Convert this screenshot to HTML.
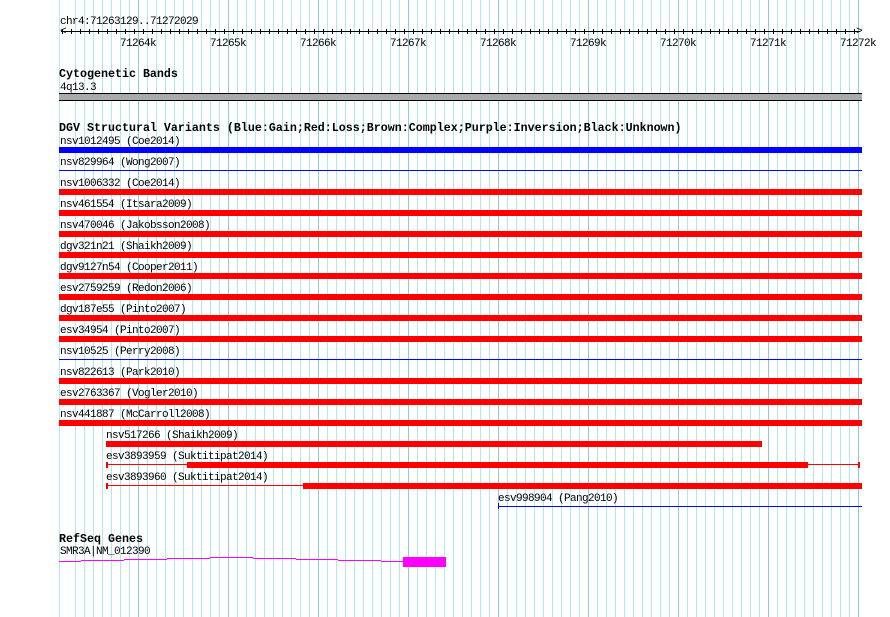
<!DOCTYPE html>
<html><head><style>
body{margin:0;width:890px;height:617px;background:#fff;position:relative;overflow:hidden;font-family:"Liberation Mono",monospace;}
.l{position:absolute;top:0;height:617px;width:1px;background:#aee9ef;}
.M{background:#8ccbe8;}
.t{position:absolute;font-size:11px;letter-spacing:-0.6px;line-height:12px;color:#000;white-space:pre;margin-top:2px;}
.h{position:absolute;font-size:11.67px;line-height:13px;font-weight:bold;color:#000;white-space:pre;margin-top:1px;}
.b{position:absolute;}
.k{margin-top:4px;}
</style></head><body>
<div id="g"></div>
<script>
var g=document.getElementById('g'),s='';
s+='<div class="l" style="left:59px"></div>';
for(var x=75;x<=858;x+=9){s+='<div class="l'+(((x-138)%90==0)?' M':'')+'" style="left:'+x+'px"></div>';}
for(var x=62;x<=858;x+=9){s+='<div class="b" style="left:'+x+'px;top:29px;width:1px;height:5px;background:#000"></div>';}
g.innerHTML=s;
</script>
<div class="t" style="left:60px;top:14px">chr4:71263129..71272029</div>
<div class="b" style="left:61px;top:31px;width:799px;height:1px;background:#000"></div>
<div class="t" style="left:60px;top:24px">&lt;</div>
<div class="t" style="left:856px;top:24px">&gt;</div>
<div class="t k" style="left:120px;top:34px">71264k</div>
<div class="t k" style="left:210px;top:34px">71265k</div>
<div class="t k" style="left:300px;top:34px">71266k</div>
<div class="t k" style="left:390px;top:34px">71267k</div>
<div class="t k" style="left:480px;top:34px">71268k</div>
<div class="t k" style="left:570px;top:34px">71269k</div>
<div class="t k" style="left:660px;top:34px">71270k</div>
<div class="t k" style="left:750px;top:34px">71271k</div>
<div class="t k" style="left:840px;top:34px">71272k</div>

<div class="h" style="left:59px;top:67px">Cytogenetic Bands</div>
<div class="t" style="left:60px;top:80px">4q13.3</div>
<div class="b" style="left:59px;top:93px;width:803px;height:6px;background:#aaa;border-top:1px solid #000;border-bottom:1px solid #000"></div>

<div class="h" style="left:59px;top:121px">DGV Structural Variants (Blue:Gain;Red:Loss;Brown:Complex;Purple:Inversion;Black:Unknown)</div>

<div class="t" style="left:60px;top:134px">nsv1012495 (Coe2014)</div>
<div class="b" style="left:59px;top:147px;width:803px;height:6px;background:#0000ff"></div>
<div class="t" style="left:60px;top:155px">nsv829964 (Wong2007)</div>
<div class="b" style="left:59px;top:170px;width:803px;height:1px;background:#0000ff"></div>
<div class="t" style="left:60px;top:176px">nsv1006332 (Coe2014)</div>
<div class="b" style="left:59px;top:189px;width:803px;height:6px;background:#f00"></div>
<div class="t" style="left:60px;top:197px">nsv461554 (Itsara2009)</div>
<div class="b" style="left:59px;top:210px;width:803px;height:6px;background:#f00"></div>
<div class="t" style="left:60px;top:218px">nsv470046 (Jakobsson2008)</div>
<div class="b" style="left:59px;top:231px;width:803px;height:6px;background:#f00"></div>
<div class="t" style="left:60px;top:239px">dgv321n21 (Shaikh2009)</div>
<div class="b" style="left:59px;top:252px;width:803px;height:6px;background:#f00"></div>
<div class="t" style="left:60px;top:260px">dgv9127n54 (Cooper2011)</div>
<div class="b" style="left:59px;top:273px;width:803px;height:6px;background:#f00"></div>
<div class="t" style="left:60px;top:281px">esv2759259 (Redon2006)</div>
<div class="b" style="left:59px;top:294px;width:803px;height:6px;background:#f00"></div>
<div class="t" style="left:60px;top:302px">dgv187e55 (Pinto2007)</div>
<div class="b" style="left:59px;top:315px;width:803px;height:6px;background:#f00"></div>
<div class="t" style="left:60px;top:323px">esv34954 (Pinto2007)</div>
<div class="b" style="left:59px;top:336px;width:803px;height:6px;background:#f00"></div>
<div class="t" style="left:60px;top:344px">nsv10525 (Perry2008)</div>
<div class="b" style="left:59px;top:359px;width:803px;height:1px;background:#0000ff"></div>
<div class="t" style="left:60px;top:365px">nsv822613 (Park2010)</div>
<div class="b" style="left:59px;top:378px;width:803px;height:6px;background:#f00"></div>
<div class="t" style="left:60px;top:386px">esv2763367 (Vogler2010)</div>
<div class="b" style="left:59px;top:399px;width:803px;height:6px;background:#f00"></div>
<div class="t" style="left:60px;top:407px">nsv441887 (McCarroll2008)</div>
<div class="b" style="left:59px;top:420px;width:803px;height:6px;background:#f00"></div>

<div class="t" style="left:106px;top:428px">nsv517266 (Shaikh2009)</div>
<div class="b" style="left:106px;top:441px;width:656px;height:6px;background:#f00"></div>
<div class="t" style="left:106px;top:449px">esv3893959 (Suktitipat2014)</div>
<div class="b" style="left:106px;top:464px;width:754px;height:1px;background:#f00"></div>
<div class="b" style="left:106px;top:462px;width:2px;height:6px;background:#f00"></div>
<div class="b" style="left:858px;top:462px;width:2px;height:6px;background:#f00"></div>
<div class="b" style="left:187px;top:462px;width:621px;height:6px;background:#f00"></div>
<div class="t" style="left:106px;top:470px">esv3893960 (Suktitipat2014)</div>
<div class="b" style="left:106px;top:485px;width:197px;height:1px;background:#f00"></div>
<div class="b" style="left:106px;top:483px;width:2px;height:6px;background:#f00"></div>
<div class="b" style="left:303px;top:483px;width:559px;height:6px;background:#f00"></div>
<div class="t" style="left:498px;top:491px">esv998904 (Pang2010)</div>
<div class="b" style="left:498px;top:506px;width:364px;height:1px;background:#0000ff"></div>
<div class="b" style="left:498px;top:503px;width:1px;height:6px;background:#0000ff"></div>

<div class="h" style="left:59px;top:532px">RefSeq Genes</div>
<div class="t" style="left:60px;top:544px">SMR3A|NM_012390</div>
<div class="b" style="left:59px;top:561px;width:22px;height:1px;background:#f0f"></div>
<div class="b" style="left:81px;top:560px;width:43px;height:1px;background:#f0f"></div>
<div class="b" style="left:124px;top:559px;width:43px;height:1px;background:#f0f"></div>
<div class="b" style="left:167px;top:558px;width:43px;height:1px;background:#f0f"></div>
<div class="b" style="left:210px;top:557px;width:43px;height:1px;background:#f0f"></div>
<div class="b" style="left:253px;top:558px;width:43px;height:1px;background:#f0f"></div>
<div class="b" style="left:296px;top:559px;width:42px;height:1px;background:#f0f"></div>
<div class="b" style="left:338px;top:560px;width:43px;height:1px;background:#f0f"></div>
<div class="b" style="left:381px;top:561px;width:22px;height:1px;background:#f0f"></div>
<div class="b" style="left:403px;top:557px;width:43px;height:10px;background:#f0f"></div>
</body></html>
